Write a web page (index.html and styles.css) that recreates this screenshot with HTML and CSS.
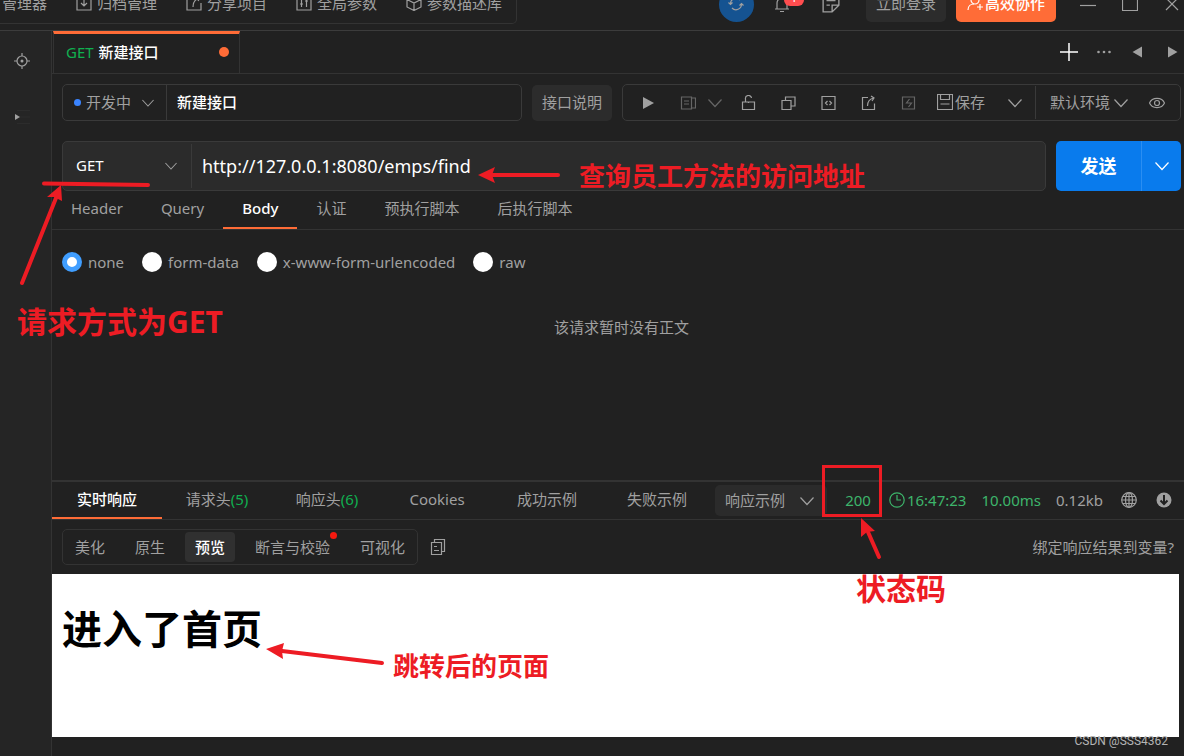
FILE: index.html
```html
<!DOCTYPE html>
<html lang="zh-CN">
<head>
<meta charset="utf-8">
<title>新建接口</title>
<link rel="stylesheet" href="styles.css">
</head>
<body>
<svg class="sprite" aria-hidden="true">
  <symbol id="chevron" viewBox="0 0 14 14"><path d="M0.500 3.500 7 10.500 13.500 3.500"/></symbol>
</svg>
<div class="app">
  <header class="topbar">
    <nav class="top-nav">
      <button class="top-item">管理器</button>
      <button class="top-item"><svg class="icon" viewBox="0 0 16 16"><path d="M1 1h14v14H1zM8 3v8M5 8l3 3 3-3"/></svg>归档管理</button>
      <button class="top-item"><svg class="icon" viewBox="0 0 16 16"><path d="M8 1H1v14h14V8M7 12c0-5 2-8 7-9M11 1l3 2-2 3"/></svg>分享项目</button>
      <button class="top-item"><svg class="icon" viewBox="0 0 16 16"><path d="M1 1h14v14H1zM5.500 4v8M10.500 4v8M4 9h3M9 6h3"/></svg>全局参数</button>
      <button class="top-item"><svg class="icon" viewBox="0 0 16 16"><path d="M8 1l7 3.500v7.500L8 15.500 1 12V4.500zM1 4.500 8 8l7-3.500M8 8v7.500"/></svg>参数描述库</button>
    </nav>
    <div class="top-actions">
      <button class="sync" aria-label="同步"><svg class="icon" viewBox="0 0 16 16"><path d="M2.500 8a5.500 5.500 0 0 1 9.500-4M13.500 8A5.500 5.500 0 0 1 4 12M.5 6.500l2 2 2-2M11.500 9.500l2-2 2 2"/></svg></button>
      <button class="bell" aria-label="通知"><svg class="icon" viewBox="0 0 16 16"><path d="M1 13h14M3 13V7a5 5 0 0 1 10 0v6M6 15.500h4"/></svg><span class="badge">1</span></button>
      <button class="plain" aria-label="笔记"><svg class="icon icon-note" viewBox="0 0 16 16"><path d="M15 9V1H1v14h8zM15 9H9v6M4 5h8M4 9h3"/></svg></button>
      <button class="btn btn-grey">立即登录</button>
      <button class="btn btn-orange"><svg class="icon" viewBox="0 0 16 16"><circle cx="8" cy="5" r="4"/><path d="M1 15c0-4 3-6 6-6M10 12h6M13 9v6"/></svg>高效协作</button>
      <div class="window-buttons">
        <button class="plain" aria-label="最小化"><svg class="icon" viewBox="0 0 16 16"><path d="M0 9.500h16"/></svg></button>
        <button class="plain" aria-label="最大化"><svg class="icon" viewBox="0 0 16 16"><path d="M.5 .5h15v14H.5z"/></svg></button>
        <button class="plain" aria-label="关闭"><svg class="icon" viewBox="0 0 16 16"><path d="M2 2l12 12M14 2 2 14"/></svg></button>
      </div>
    </div>
  </header>
  <div class="workspace">
    <aside class="sidebar">
      <button class="plain" aria-label="定位"><svg class="icon" viewBox="0 0 16 16"><circle cx="8" cy="8" r="5"/><circle class="fill" cx="8" cy="8" r="1.500"/><path d="M8 0v3M8 13v3M0 8h3M13 8h3"/></svg></button>
      <button class="plain expand" aria-label="展开"><svg class="icon" viewBox="0 0 16 16"><path class="fill" d="M1 5l5 3-5 3z"/><path class="faint" d="M3 1.500h13M6 8h10M3 14.500h13"/></svg></button>
    </aside>
    <main class="main">
      <div class="tabbar">
        <button class="file-tab"><span class="verb">GET</span><span>新建接口</span><span class="unsaved"></span></button>
        <div class="tab-tools">
          <button class="plain white" aria-label="新建"><svg class="icon icon-plus" viewBox="0 0 18 18"><path d="M9 0v18M0 9h18"/></svg></button>
          <button class="plain" aria-label="更多"><svg class="icon" viewBox="0 0 16 16"><circle class="fill" cx="2.500" cy="8" r="1.300"/><circle class="fill" cx="8" cy="8" r="1.300"/><circle class="fill" cx="13.500" cy="8" r="1.300"/></svg></button>
          <button class="plain" aria-label="向左"><svg class="icon" viewBox="0 0 16 16"><path class="fill" d="M12 2.500v11L2.500 8z"/></svg></button>
          <button class="plain" aria-label="向右"><svg class="icon" viewBox="0 0 16 16"><path class="fill" d="M4 2.500v11L13.500 8z"/></svg></button>
        </div>
      </div>
      <div class="row name-row">
        <div class="field name-field">
          <span class="pick pick-status"><i class="dot"></i><select aria-label="状态"><option>开发中</option></select><svg class="icon chev chev-small"><use href="#chevron"/></svg></span>
          <input class="name-input" type="text" aria-label="接口名称" value="新建接口">
        </div>
        <button class="btn btn-grey">接口说明</button>
        <div class="field toolbar">
          <button class="tool" aria-label="运行"><svg class="icon" viewBox="0 0 16 16"><path class="fill" d="M3 2v12l11-6z"/></svg></button>
          <span class="tool-pair"><button class="plain dim" aria-label="文档"><svg class="icon" viewBox="0 0 16 16"><path d="M1.500 2h10v12h-10zM11.500 3h4v10h-4M4 6h5M4 9h5"/></svg></button><button class="plain dim" aria-label="文档选项"><svg class="icon chev"><use href="#chevron"/></svg></button></span>
          <button class="tool" aria-label="解锁"><svg class="icon" viewBox="0 0 16 16"><path d="M2.500 7h12v7.500h-12zM5.500 7V4a3 3 0 0 1 6-1M8.500 7v1"/></svg></button>
          <button class="tool" aria-label="复制"><svg class="icon" viewBox="0 0 16 16"><path d="M2 5.500h9v9H2zM5.500 5V2H15v9h-3.500"/></svg></button>
          <button class="tool" aria-label="代码"><svg class="icon" viewBox="0 0 16 16"><path d="M2 1.500h13v13H2zM7.500 6 5.500 8l2 2M9.500 6l2 2-2 2"/></svg></button>
          <button class="tool" aria-label="分享"><svg class="icon" viewBox="0 0 16 16"><path d="M8 2.500H2.500v12h12v-6M7.500 11c0-5 2-7 6-8M11 1l3 2-2 3"/></svg></button>
          <button class="tool dim" aria-label="快捷"><svg class="icon" viewBox="0 0 16 16"><path d="M2.500 2h12v12h-12zM9.500 4l-3 4h5l-3 4"/></svg></button>
          <button class="save"><svg class="icon" viewBox="0 0 16 16"><path d="M.5 .5h15v15H.5zM3.500 .5v5h9v-5M3.500 10h9"/></svg>保存</button>
          <button class="plain save-more" aria-label="保存选项"><svg class="icon chev"><use href="#chevron"/></svg></button>
          <span class="pick pick-env"><select aria-label="环境"><option>默认环境</option></select><svg class="icon chev"><use href="#chevron"/></svg></span>
          <button class="plain eye" aria-label="查看环境"><svg class="icon" viewBox="0 0 16 16"><path d="M.5 8C3 1.800 13 1.800 15.500 8 13 14.200 3 14.200 .5 8z"/><circle cx="8" cy="8" r="2.500"/></svg></button>
        </div>
      </div>
      <div class="row url-row">
        <div class="field url-field">
          <span class="pick pick-method"><select aria-label="请求方式"><option>GET</option></select><svg class="icon chev chev-small"><use href="#chevron"/></svg></span>
          <input class="url-input" type="text" aria-label="地址" value="http://127.0.0.1:8080/emps/find">
        </div>
        <div class="send">
          <button class="send-main">发送</button>
          <button class="send-more" aria-label="发送选项"><svg class="icon chev"><use href="#chevron"/></svg></button>
        </div>
      </div>
      <div class="req-tabs" role="tablist">
        <button role="tab">Header</button>
        <button role="tab">Query</button>
        <button role="tab" aria-selected="true">Body</button>
        <button role="tab">认证</button>
        <button role="tab">预执行脚本</button>
        <button role="tab">后执行脚本</button>
      </div>
      <div class="body-panel">
        <div class="radios">
          <label><input type="radio" name="body" checked>none</label>
          <label><input type="radio" name="body">form-data</label>
          <label><input type="radio" name="body">x-www-form-urlencoded</label>
          <label><input type="radio" name="body">raw</label>
        </div>
        <p class="empty">该请求暂时没有正文</p>
      </div>
      <section class="response">
        <div class="res-bar">
          <div class="res-tabs" role="tablist">
            <button role="tab" aria-selected="true">实时响应</button>
            <button role="tab">请求头<span class="count">(5)</span></button>
            <button role="tab">响应头<span class="count">(6)</span></button>
            <button role="tab">Cookies</button>
            <button role="tab">成功示例</button>
            <button role="tab">失败示例</button>
          </div>
          <span class="pick pick-example"><select aria-label="响应示例"><option>响应示例</option></select><svg class="icon chev"><use href="#chevron"/></svg></span>
          <div class="stats">
            <span class="ok code">200</span>
            <span class="ok time"><svg class="icon" viewBox="0 0 16 16"><circle cx="8" cy="8" r="7.200"/><path d="M8 3v5h4"/></svg>16:47:23</span>
            <span class="ok">10.00ms</span>
            <span>0.12kb</span>
            <span class="stat-icons">
              <button class="plain" aria-label="网络"><svg class="icon" viewBox="0 0 16 16"><circle cx="8" cy="8" r="7.300"/><ellipse cx="8" cy="8" rx="3.500" ry="7.300"/><path d="M8 .7v14.600M.7 8h14.600M2 4.500h12M2 11.500h12"/></svg></button>
              <button class="plain" aria-label="下载"><svg class="icon" viewBox="0 0 16 16"><circle class="fill" cx="8" cy="8" r="7.500"/><path class="cut" d="M8 3v9M4.500 8.500 8 12l3.500-3.500"/></svg></button>
            </span>
          </div>
        </div>
        <div class="view-bar">
          <div class="views">
            <button>美化</button>
            <button>原生</button>
            <button class="current">预览</button>
            <button class="flagged">断言与校验</button>
            <button>可视化</button>
          </div>
          <button class="plain" aria-label="复制响应"><svg class="icon" viewBox="0 0 16 16"><path d="M1.500 3.500h10v12h-10zM4.500 3V.5h10v12H12M4 7.500h3M4 11.500h5"/></svg></button>
          <a class="bind" href="#">绑定响应结果到变量?</a>
        </div>
        <div class="preview"><h1>进入了首页</h1></div>
      </section>
    </main>
  </div>
  <svg class="marks" viewBox="0 0 1184 756" width="1184" height="756" aria-hidden="true">
    <g class="mark-lines">
      <path d="M44 183.500 148 185"/>
      <path d="M22 283 56 198"/>
      <path d="M558 175H492"/>
      <path d="M382 663 282 651"/>
      <path d="M879 557 868 532"/>
    </g>
    <g class="mark-heads">
      <path d="M61 185 47 197 54 197 62 201z"/>
      <path d="M478 175l17-8-3 8 3 8z"/>
      <path d="M266 649l18-6-2 8 1 8z"/>
      <path d="M861 518l14 13-8 1-6 5z"/>
    </g>
    <rect class="mark-box" x="823.500" y="466.500" width="57" height="49"/>
  </svg>
  <span class="note note-method">请求方式为GET</span>
  <span class="note note-url">查询员工方法的访问地址</span>
  <span class="note note-code">状态码</span>
  <span class="note note-page">跳转后的页面</span>
  <span class="watermark">CSDN @SSS4362</span>
</div>
</body>
</html>
```

FILE: styles.css
```css
* { box-sizing: border-box; }
body {
  margin: 0;
  background: #212121;
  color: #a0a0a0;
  font: 15px/20px "Noto Sans", "Noto Sans CJK SC", sans-serif;
}
button, input, select {
  margin: 0;
  padding: 0;
  border: 0;
  background: none;
  color: inherit;
  font: inherit;
  appearance: none;
  white-space: nowrap;
}
.sprite { display: none; }
.icon {
  display: block;
  flex: none;
  width: 16px;
  height: 16px;
  fill: none;
  stroke: currentColor;
  stroke-width: 1.2;
}
.icon .fill { fill: currentColor; stroke: none; }
.icon .faint { stroke: #2c2c2c; }
.icon .cut { stroke: #212121; stroke-width: 2; }
.chev { width: 14px; height: 14px; }
.chev-small { width: 12px; height: 12px; }
.plain { display: flex; align-items: center; }
.dim { color: #666; }
.white { color: #fff; }

.app {
  position: relative;
  display: flex;
  flex-direction: column;
  min-height: 100vh;
  overflow: hidden;
}

.topbar {
  display: flex;
  justify-content: space-between;
  height: 31px;
  overflow: hidden;
  border-bottom: 1px solid #3c3c3c;
}
.top-nav, .top-actions {
  display: flex;
  align-items: center;
  height: 40px;
  margin-top: -16px;
}
.top-nav {
  gap: 29px;
  padding: 0 14px 2px 2px;
  border: 1px solid #333;
  border-left: 0;
  border-radius: 0 0 5px 0;
}
.top-item { display: flex; align-items: center; gap: 5px; }
.top-actions { padding-right: 4px; }
.sync {
  display: grid;
  place-items: center;
  width: 35px;
  height: 35px;
  border-radius: 50%;
  background: #155391;
}
.bell { position: relative; margin: 0 32px 0 20px; }
.badge {
  position: absolute;
  left: 10px;
  top: -10px;
  width: 20px;
  height: 20px;
  padding-top: 2px;
  border-radius: 6px;
  background: #ff4d4f;
  color: #fff;
  font-size: 12px;
}
.icon-note { width: 18px; height: 18px; }
.btn {
  display: flex;
  flex: none;
  align-items: center;
  justify-content: center;
  height: 36px;
  padding: 0 10px 2px;
  border-radius: 5px;
}
.btn-grey { background: #2c2c2c; }
.top-actions .btn-grey { margin: 0 10px 0 26px; }
.btn-orange { gap: 2px; background: #ff6c37; color: #fff; font-weight: 500; padding: 0 11px 2px; }
.window-buttons { display: flex; gap: 26px; margin-left: 24px; }

.workspace { display: flex; flex: 1; }
.sidebar {
  display: flex;
  flex-direction: column;
  gap: 40px;
  flex: none;
  width: 52px;
  padding: 22px 0 0 14px;
  border-right: 1px solid #333;
  background: #252525;
}
.main { display: flex; flex: 1; flex-direction: column; min-width: 0; }

.tabbar {
  display: flex;
  justify-content: space-between;
  height: 43px;
  padding-left: 1px;
  border-bottom: 1px solid #333;
}
.file-tab {
  display: flex;
  align-items: center;
  gap: 5px;
  width: 187px;
  padding: 0 10px 4px 12px;
  border-top: 3px solid #ff6c37;
  border-right: 1px solid #333;
  border-left: 1px solid #333;
  color: #fff;
  font-weight: 500;
}
.verb { color: #10b050; font-weight: 400; }
.unsaved { width: 10px; height: 10px; margin-left: auto; border-radius: 50%; background: #ff6c37; }
.tab-tools { display: flex; align-items: center; gap: 18px; padding-right: 4px; }
.icon-plus { width: 18px; height: 18px; stroke-width: 1.5; }

.row { display: flex; align-items: center; gap: 10px; padding: 0 3px 0 10px; }
.name-row { margin-top: 10px; }
.url-row { margin-top: 20px; }
.field { display: flex; border: 1px solid #3a3a3a; border-radius: 5px; }
.name-field, .toolbar { height: 37px; }
.name-field, .url-field { flex: 1; min-width: 0; }
.name-field input, .url-field input { flex: 1; min-width: 0; padding: 0 10px; color: #fff; }
.name-field .name-input { padding-bottom: 2px; font-weight: 500; }
.pick { display: flex; align-items: center; flex: none; }
.pick select { flex: 1; padding-bottom: 2px; }
.pick .icon { pointer-events: none; }
.pick-status { width: 104px; padding: 0 12px 0 11px; border-right: 1px solid #3a3a3a; gap: 5px; }
.dot { width: 7px; height: 7px; border-radius: 50%; background: #3a84ff; }
.toolbar { flex: none; align-items: center; padding-left: 5px; }
.tool { display: grid; place-items: center; width: 40px; height: 34px; }
.tool-pair { display: flex; gap: 12px; padding: 0 6px 0 12px; }
.save { display: flex; align-items: center; gap: 2px; padding: 0 0 2px 9px; }
.save-more { padding: 0 13px 0 23px; }
.pick-env { height: 33px; padding: 0 21px 0 14px; border-left: 1px solid #3a3a3a; gap: 3px; }
.eye { padding-right: 15px; }

.url-field { height: 50px; background: #2b2b2b; }
.pick-method { width: 129px; margin: 2px 0; padding: 0 14px 0 13px; border-right: 1px solid #3a3a3a; color: #fff; }
.pick-method .icon { color: #a0a0a0; }
.url-input { font-size: 18px; line-height: 24px; }
.send { display: flex; height: 50px; border-radius: 5px; overflow: hidden; background: #097bed; color: #fff; }
.send-main { width: 85px; font-size: 18px; font-weight: 700; }
.send-more { display: grid; place-items: center; width: 40px; border-left: 1px solid #2b8ef2; }

.req-tabs { display: flex; height: 39px; border-bottom: 1px solid #333; }
.req-tabs button { padding: 0 19px 2px; }
.req-tabs button, .res-tabs button { border-bottom: 2px solid transparent; }
.req-tabs [aria-selected], .res-tabs [aria-selected] { border-color: #ff6c37; color: #fff; font-weight: 500; }

.body-panel { height: 250px; padding: 22px 3px 0 10px; }
.radios { display: flex; gap: 18px; }
.radios label { display: flex; align-items: center; gap: 6px; }
.radios input { width: 20px; height: 20px; border-radius: 50%; background: #fff; }
.radios input:checked { border: 5px solid #409eff; }
.empty { margin: 45px 0 0; text-align: center; }

.response { border-top: 2px solid #333; }
.res-bar { display: flex; align-items: center; height: 38px; border-bottom: 1px solid #333; }
.res-tabs { display: flex; flex: none; align-self: stretch; }
.res-tabs button { width: 110px; padding-bottom: 2px; }
.count { color: #10b050; }
.pick-example { width: 112px; height: 31px; margin-left: 3px; padding: 0 13px 0 10px; border-radius: 5px; background: #2b2b2b; }
.stats { display: flex; flex: 1; align-items: center; gap: 15px; justify-content: flex-end; padding: 0 12px 2px 0; }
.ok { color: #3db56b; }
.code { padding-right: 3px; }
.time { display: flex; align-items: center; gap: 2px; }
.stat-icons { display: flex; gap: 19px; padding-left: 3px; }

.view-bar { display: flex; align-items: center; gap: 12px; height: 54px; padding: 0 10px; }
.views { display: flex; gap: 10px; padding: 2px; border: 1px solid #333; border-radius: 5px; }
.views button { height: 30px; padding: 0 10px; border-radius: 4px; }
.views .current { background: #303030; color: #fff; font-weight: 500; }
.views .flagged { position: relative; }
.flagged::after {
  content: "";
  position: absolute;
  top: 0;
  right: 3px;
  width: 7px;
  height: 7px;
  border-radius: 50%;
  background: #f5190f;
}
.bind { margin-left: auto; color: inherit; text-decoration: none; }

.preview { height: 163px; margin-right: 5px; padding: 29px 10px; background: #fff; color: #000; }
.preview h1 { margin: 0; font-size: 40px; line-height: 52px; }

.marks { position: absolute; left: 0; top: 0; pointer-events: none; }
.mark-lines { fill: none; stroke: #ed1c24; stroke-width: 4; stroke-linecap: round; }
.mark-heads { fill: #ed1c24; }
.mark-box { fill: none; stroke: #ed1c24; stroke-width: 3; }
.note { position: absolute; color: #ed1c24; font-size: 26px; line-height: 36px; font-weight: 700; white-space: nowrap; }
.note-method { left: 17px; top: 304px; font-size: 30px; }
.note-url { left: 579px; top: 158px; }
.note-code { left: 856px; top: 571px; font-size: 30px; }
.note-page { left: 393px; top: 648px; }
.watermark {
  position: absolute;
  right: 16px;
  top: 732px;
  color: #b4b4b4;
  font: 12px/18px Roboto, sans-serif;
}
```
